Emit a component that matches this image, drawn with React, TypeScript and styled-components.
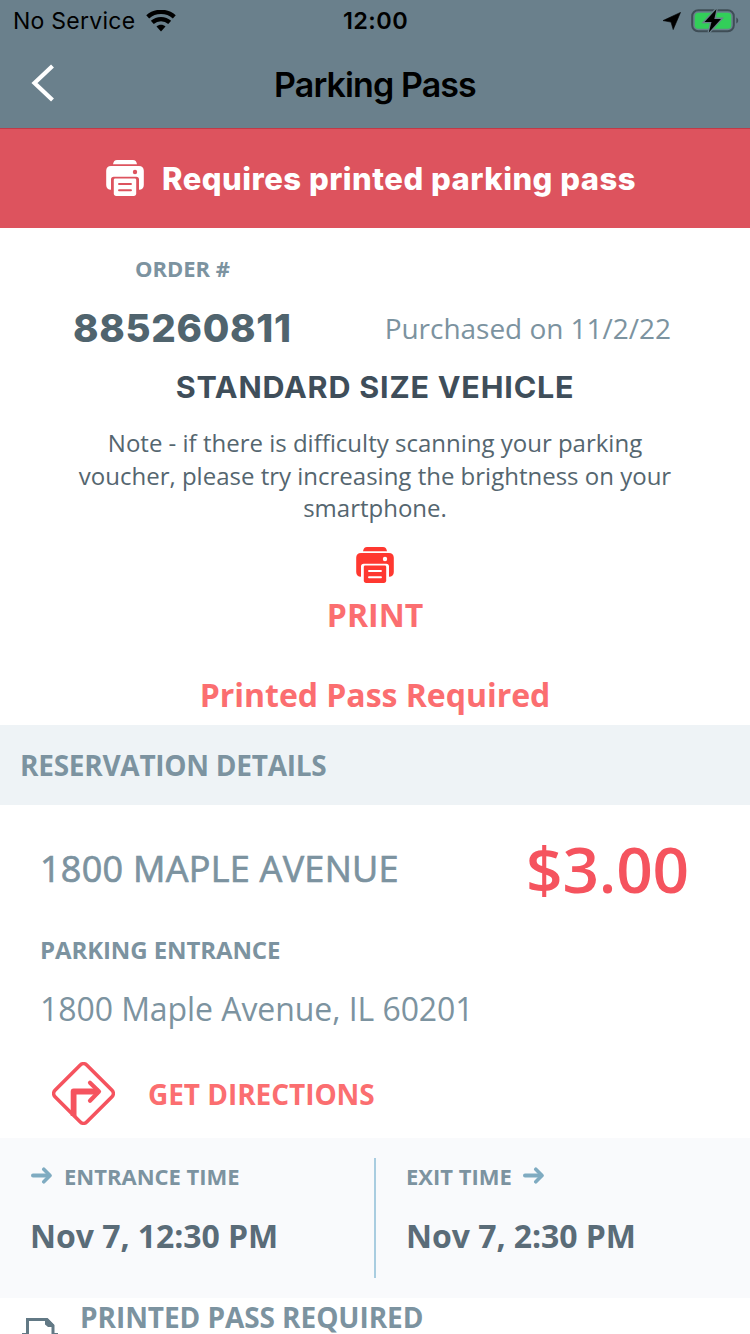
import React from 'react';
import styled, { createGlobalStyle } from 'styled-components';

const Global = createGlobalStyle`
  * { box-sizing: border-box; }
  body { margin: 0; background: #fff; overflow: hidden; }
`;

const Screen = styled.div`
  width: 750px;
  height: 1334px;
  overflow: hidden;
  background: #fff;
  font-family: 'Open Sans', 'Noto Sans', sans-serif;
  svg { display: block; flex: none; }
`;

const Label = styled.div<{
  $size: number;
  $line: number;
  $color: string;
  $weight?: number;
  $track?: number;
  $display?: boolean;
  $stroke?: number;
}>`
  font-size: ${p => p.$size}px;
  line-height: ${p => p.$line}px;
  color: ${p => p.$color};
  font-weight: ${p => p.$weight ?? 400};
  letter-spacing: ${p => p.$track ?? 0}px;
  font-family: ${p => (p.$display ? "'Inter', sans-serif" : 'inherit')};
  -webkit-text-stroke: ${p => p.$stroke ?? 0}px ${p => p.$color};
  white-space: nowrap;
`;

const Header = styled.header`
  height: 128px;
  background: #6a808c;
`;

const StatusBar = styled.div`
  height: 41px;
  display: grid;
  grid-template-columns: 1fr auto 1fr;
  align-items: center;
  padding: 1px 12px 0 13px;
`;

const StatusGroup = styled.div<{ $end?: boolean }>`
  display: flex;
  align-items: center;
  justify-content: ${p => (p.$end ? 'flex-end' : 'flex-start')};
  gap: ${p => (p.$end ? 10 : 11)}px;
  margin-right: ${p => (p.$end ? -1 : 0)}px;
`;

const NavBar = styled.div`
  height: 87px;
  display: grid;
  grid-template-columns: 100px 1fr 100px;
  align-items: center;
  text-align: center;
`;

const BackButton = styled.button`
  border: 0;
  background: none;
  padding: 0 0 4px 30px;
`;

const Banner = styled.div`
  height: 100px;
  display: flex;
  align-items: center;
  gap: 18px;
  padding-left: 106px;
  background: #dd535e;
  border-top: 1px solid #c03a48;
`;

const PrinterBox = styled.span`
  padding-bottom: 1px;
`;

const Order = styled.section`
  height: 497px;
  padding-top: 25px;
  display: flex;
  flex-direction: column;
  align-items: center;
`;

const OrderRow = styled.div`
  width: 100%;
  display: flex;
  justify-content: space-between;
  padding: 0 79px 0 73px;
`;

const OrderHeading = styled.div`
  width: 365px;
  align-self: flex-start;
  text-align: center;
`;

const Note = styled.p`
  margin: 27px 0 22px;
  width: 600px;
  font-size: 24px;
  line-height: 32.68px;
  color: #55666f;
  text-align: center;
`;

const SectionBar = styled.div`
  height: 80px;
  padding: 0 20px;
  display: flex;
  align-items: center;
  background: #eef3f6;
`;

const Details = styled.section`
  height: 333px;
  padding: 24px 61px 0 40px;
`;

const PriceRow = styled.div`
  height: 80px;
  display: flex;
  align-items: center;
  justify-content: space-between;
`;

const Directions = styled.div`
  display: flex;
  align-items: center;
  gap: 33px;
  padding-left: 12px;
  margin-top: 36px;
`;

const DirectionsIcon = styled.span`
  padding-bottom: 2px;
`;

const Times = styled.section`
  height: 160px;
  display: grid;
  grid-template-columns: 374px 1fr;
  background: #f9fafc;
  padding: 20px 0;
`;

const TimeCell = styled.div<{ $divided?: boolean }>`
  padding-left: 30px;
  border-left: ${p => (p.$divided ? '2px solid #a9cde0' : '0')};
`;

const TimeHead = styled.div<{ $gap: number }>`
  height: 36px;
  display: flex;
  align-items: center;
  gap: ${p => p.$gap}px;
  margin-bottom: 21px;
`;

const ArrowBox = styled.span`
  padding-bottom: 2px;
`;

const Footer = styled.div`
  height: 36px;
  display: flex;
  align-items: flex-start;
  gap: 22px;
  padding-left: 22px;
  overflow: hidden;
`;

const PageIcon = styled.span`
  padding-top: 19px;
`;

const FooterText = styled.div`
  padding-top: 4px;
`;

function Printer({ color, paper }: { color: string; paper: string }) {
  return (
    <svg width="38" height="36" viewBox="0 0 38 36">
      <path d="M7 4.200C7.400 1.600 8.800 0 11 0h16c2.200 0 3.600 1.600 4 4.200z" fill={color} />
      <path d="M5 6h28c3 0 4.800 1.900 4.800 4.800V25c0 3-1.800 4.800-4.800 4.800V19.500c0-1.700-1-2.700-2.700-2.700H7.700C6 16.800 5 17.800 5 19.500v10.300C2 29.800.2 28 .2 25V10.800C.2 7.900 2 6 5 6z" fill={color} />
      <circle cx="29" cy="12" r="2.200" fill={paper} />
      <path d="M9.300 18.500h19.400c1 0 1.500.6 1.500 1.500v13.500c0 1.500-.9 2.400-2.400 2.400H10.200c-1.500 0-2.400-.9-2.400-2.400V20c0-.9.500-1.500 1.500-1.500z" fill={color} />
      <path d="M13 24h12M13 30.200h12" stroke={paper} strokeWidth="1.900" strokeLinecap="round" />
    </svg>
  );
}

function Arrow() {
  return (
    <svg width="22" height="17" viewBox="0 0 22 17" fill="none" stroke="#7fabc1" strokeWidth="4" strokeLinecap="round" strokeLinejoin="round">
      <path d="M3 8.500h16" />
      <path d="M13.800 2.200l6.200 6.300-6.200 6.300" strokeWidth="3.600" />
    </svg>
  );
}

export default function App() {
  return (
    <Screen>
      <Global />
      <Header>
        <StatusBar>
          <StatusGroup>
            <Label $display $size={23} $line={40} $color="#000" $track={0.25}>No Service</Label>
            <svg width="30" height="23" viewBox="0 0 30 23" fill="none" stroke="#000">
              <path d="M1.700 6.900C9.300.2 20.700.2 28.300 6.900" strokeWidth="4.400" />
              <path d="M6.300 12.400c4.900-4.500 12.500-4.500 17.400 0" strokeWidth="4.300" />
              <path d="M10.500 16.600c2.500-2.400 6.500-2.400 9 0L15 21.500z" fill="#000" stroke="none" />
            </svg>
          </StatusGroup>
          <Label $display $size={23.5} $line={40} $color="#000" $weight={600} $track={0.4}>12:00</Label>
          <StatusGroup $end>
            <svg width="19" height="18" viewBox="0 0 19 18"><path d="M18.500.4L1 8.600l8 1.500 2.200 7.500z" fill="#000" stroke="#000" strokeWidth=".6" strokeLinejoin="round" /></svg>
            <svg width="48" height="24" viewBox="0 0 48 24">
              <rect x="1.200" y="1.200" width="41.600" height="21" rx="6" fill="none" stroke="#3f4d56" strokeWidth="2" />
              <rect x="3.800" y="3.700" width="36.400" height="16" rx="3.500" fill="#32ce59" />
              <path d="M45.300 8.500v6c2.500-1 2.500-5 0-6z" fill="#3f4d56" />
              <path d="M25.500 0L13.500 13h7L17.800 23.500 30 9.900h-6.700z" fill="#000" stroke="#6a808c" strokeWidth="2.600" paintOrder="stroke" />
            </svg>
          </StatusGroup>
        </StatusBar>
        <NavBar>
          <BackButton aria-label="Back">
            <svg width="26" height="38" viewBox="0 0 26 38"><path d="M22.500 2L4.500 19l18 17" fill="none" stroke="#fff" strokeWidth="4.200" /></svg>
          </BackButton>
          <Label $display $size={34} $line={87} $color="#000" $weight={600} $track={-0.9}>Parking Pass</Label>
        </NavBar>
      </Header>
      <Banner>
        <PrinterBox><Printer color="#fff" paper="#dd535e" /></PrinterBox>
        <Label $display $size={31} $line={58} $color="#fff" $weight={800} $track={0.5}>Requires printed parking pass</Label>
      </Banner>
      <Order>
        <OrderHeading>
          <Label $size={22} $line={30} $color="#7c93a0" $weight={700}>ORDER #</Label>
        </OrderHeading>
        <OrderRow>
          <Label $display $size={38.5} $line={90} $color="#50646e" $weight={800} $track={0.7}>885260811</Label>
          <Label $size={28} $line={90} $color="#7c93a0" $track={-0.03}>Purchased on 11/2/22</Label>
        </OrderRow>
        <Label $display $size={30.5} $line={27} $color="#3f4e5a" $weight={750} $track={0.8}>STANDARD SIZE VEHICLE</Label>
        <Note>Note - if there is difficulty scanning your parking voucher, please try increasing the brightness on your smartphone.</Note>
        <Printer color="#ff3830" paper="#fff" />
        <Label $size={32} $line={64} $color="#fb6e70" $weight={700}>PRINT</Label>
        <Label $size={32} $line={96} $color="#fb6e70" $weight={700} $track={-0.03}>Printed Pass Required</Label>
      </Order>
      <SectionBar>
        <Label $size={28} $line={80} $color="#7c93a0" $weight={700} $track={-0.27}>RESERVATION DETAILS</Label>
      </SectionBar>
      <Details>
        <PriceRow>
          <Label $size={36} $line={80} $color="#7c93a0" $track={0.27} $stroke={0.7}>1800 MAPLE AVENUE</Label>
          <Label $size={64} $line={80} $color="#f5535e" $weight={600} $track={-0.2}>$3.00</Label>
        </PriceRow>
        <Label $size={24} $line={82} $color="#7c93a0" $weight={700} $track={-0.1}>PARKING ENTRANCE</Label>
        <Label $size={32} $line={35} $color="#7c93a0" $track={-0.07}>1800 Maple Avenue, IL 60201</Label>
        <Directions>
          <DirectionsIcon>
            <svg width="63" height="63" viewBox="0 0 63 63" fill="none" stroke="#f5535e">
              <rect x="9.100" y="9.100" width="44.800" height="44.800" rx="4.500" transform="rotate(45 31.500 31.500)" strokeWidth="3.600" />
              <path d="M21.600 54V29.500h25" strokeWidth="5.800" strokeLinejoin="round" />
              <path d="M38 20.800l9 8.700-9 9.200" strokeWidth="4.200" strokeLinecap="round" strokeLinejoin="round" />
            </svg>
          </DirectionsIcon>
          <Label $size={28} $line={65} $color="#fb6e70" $weight={700} $track={-0.05}>GET DIRECTIONS</Label>
        </Directions>
      </Details>
      <Times>
        <TimeCell>
          <TimeHead $gap={12}>
            <ArrowBox><Arrow /></ArrowBox>
            <Label $size={22} $line={36} $color="#7c93a0" $weight={700}>ENTRANCE TIME</Label>
          </TimeHead>
          <Label $size={32} $line={42} $color="#5a6c78" $weight={700} $track={-0.05}>Nov 7, 12:30 PM</Label>
        </TimeCell>
        <TimeCell $divided>
          <TimeHead $gap={10}>
            <Label $size={22} $line={36} $color="#7c93a0" $weight={700}>EXIT TIME</Label>
            <ArrowBox><Arrow /></ArrowBox>
          </TimeHead>
          <Label $size={32} $line={42} $color="#5a6c78" $weight={700} $track={-0.05}>Nov 7, 2:30 PM</Label>
        </TimeCell>
      </Times>
      <Footer>
        <PageIcon>
          <svg width="36" height="36" viewBox="0 0 36 36" fill="none" stroke="#627985" strokeWidth="3">
            <path d="M5.500 17V2.500h19.500l6 6V17" />
            <path d="M23 2v5.500l3 2.500h6V8l-6-6z" fill="#627985" stroke="none" />
            <path d="M0 17.500h6M31 17.500h5" />
          </svg>
        </PageIcon>
        <FooterText>
          <Label $size={28} $line={31} $color="#7c93a0" $weight={700} $track={-0.07}>PRINTED PASS REQUIRED</Label>
        </FooterText>
      </Footer>
    </Screen>
  );
}
